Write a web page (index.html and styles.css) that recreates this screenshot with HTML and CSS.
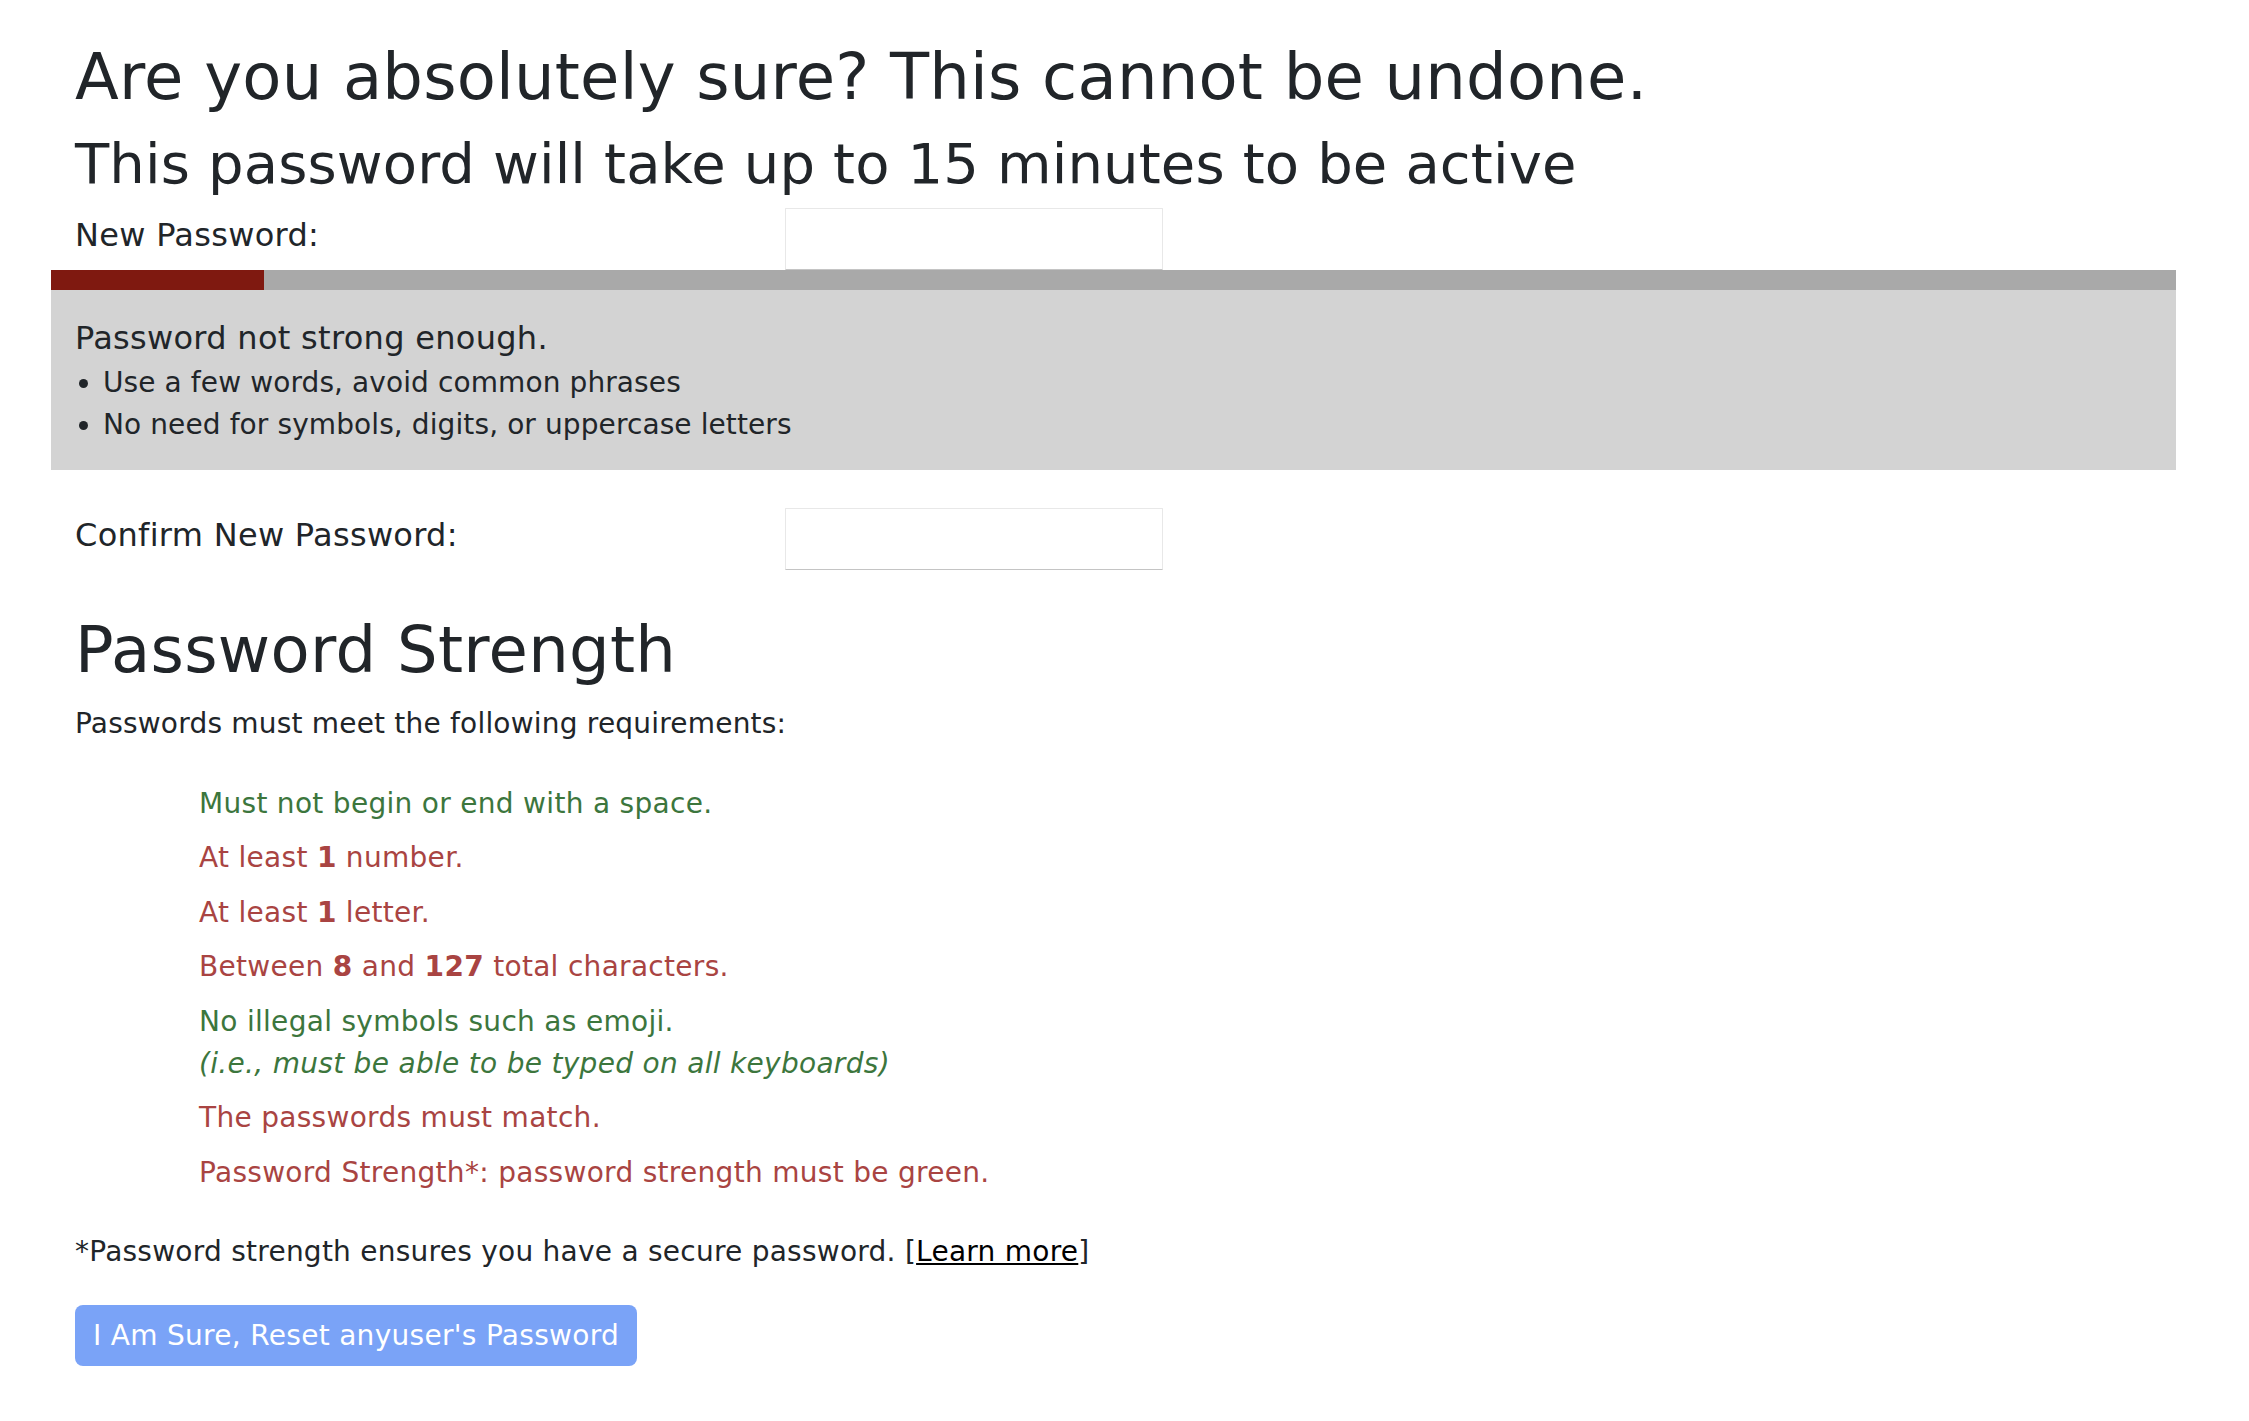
FILE: index.html
```html
<!DOCTYPE html>
<html lang="en">
<head>
  <meta charset="UTF-8">
  <meta name="viewport" content="width=device-width, initial-scale=1.0">
  <title>Reset Password</title>
  <link rel="stylesheet" href="styles.css">
</head>
<body>
  <div class="page">
    <div class="inner">
      <h1 class="title">Are you absolutely sure? This cannot be undone.</h1>
      <h2 class="subtitle">This password will take up to 15 minutes to be active</h2>

      <div class="field-row">
        <label for="newPassword">New Password:</label>
        <input type="password" id="newPassword">
      </div>
    </div>

    <div class="strength">
      <div class="strength-bar">
        <div class="strength-fill" style="width: 10%;"></div>
      </div>
      <div class="strength-feedback">
        <p class="feedback-title">Password not strong enough.</p>
        <ul class="feedback-list">
          <li>Use a few words, avoid common phrases</li>
          <li>No need for symbols, digits, or uppercase letters</li>
        </ul>
      </div>
    </div>

    <div class="inner">
      <div class="field-row confirm">
        <label for="confirmPassword">Confirm New Password:</label>
        <input type="password" id="confirmPassword">
      </div>

      <h1 class="section-title">Password Strength</h1>
      <p class="intro">Passwords must meet the following requirements:</p>

      <ul class="requirements">
        <li class="ok">Must not begin or end with a space.</li>
        <li class="bad">At least <b>1</b> number.</li>
        <li class="bad">At least <b>1</b> letter.</li>
        <li class="bad">Between <b>8</b> and <b>127</b> total characters.</li>
        <li class="ok">No illegal symbols such as emoji.<br><i>(i.e., must be able to be typed on all keyboards)</i></li>
        <li class="bad">The passwords must match.</li>
        <li class="bad">Password Strength*: password strength must be green.</li>
      </ul>

      <p class="note">*Password strength ensures you have a secure password. [<a href="#">Learn more</a>]</p>

      <button class="submit" disabled>I Am Sure, Reset anyuser's Password</button>
    </div>
  </div>
</body>
</html>
```

FILE: styles.css
```css
body {
  margin: 0;
  font-family: "DejaVu Sans", Verdana, sans-serif;
  font-size: 28px;
  line-height: 1.5;
  letter-spacing: 0.3px;
  color: #212529;
  background: #fff;
}
.page {
  width: 2125px;
  margin-left: 51px;
  padding-top: 39px;
}
.inner {
  padding: 0 24px;
}
.title {
  font-size: 64px;
  font-weight: normal;
  line-height: 1.2;
  letter-spacing: 0.2px;
  margin: 0 0 14px;
}
.subtitle {
  font-size: 56px;
  font-weight: normal;
  line-height: 1.2;
  letter-spacing: 0.15px;
  margin: 0 0 11px;
}
.field-row {
  display: flex;
  align-items: flex-start;
}
.field-row label {
  width: 710px;
  font-size: 32px;
  line-height: 48px;
  margin-top: 3px;
}
.field-row input {
  width: 378px;
  height: 62px;
  box-sizing: border-box;
  margin: 0;
  border: 1px solid #e8e8e8;
  border-bottom-color: #c4c4c4;
  border-radius: 1px;
  background: #fff;
}
.strength-bar {
  height: 20px;
  background: #a9a9a9;
}
.strength-fill {
  height: 100%;
  background: #7f1910;
}
.strength-feedback {
  background: #d3d3d3;
  padding: 24px;
}
.feedback-title {
  margin: 0;
  font-size: 32px;
  line-height: 48px;
}
.feedback-list {
  margin: 0;
  padding-left: 28px;
  letter-spacing: 0.1px;
}
.confirm {
  margin-top: 38px;
}
.section-title {
  font-size: 64px;
  font-weight: normal;
  line-height: 1.2;
  letter-spacing: 0.3px;
  margin: 42px 0 14px;
}
.intro {
  margin: 0;
  letter-spacing: 0.2px;
}
.requirements {
  list-style: none;
  margin: 38px 0 0;
  padding-left: 124px;
  display: flex;
  flex-direction: column;
  gap: 12.5px;
}
.requirements .ok {
  color: #3c763d;
}
.requirements .bad {
  color: #a94442;
}
.note {
  margin: 37px 0 0;
  letter-spacing: 0.25px;
}
.note a {
  color: #000;
}
.submit {
  margin-top: 32px;
  height: 61px;
  padding: 0 18px;
  font-family: inherit;
  font-size: 28px;
  letter-spacing: 0.3px;
  color: #fff;
  background: #7aa3f7;
  border: none;
  border-radius: 8px;
}
```
